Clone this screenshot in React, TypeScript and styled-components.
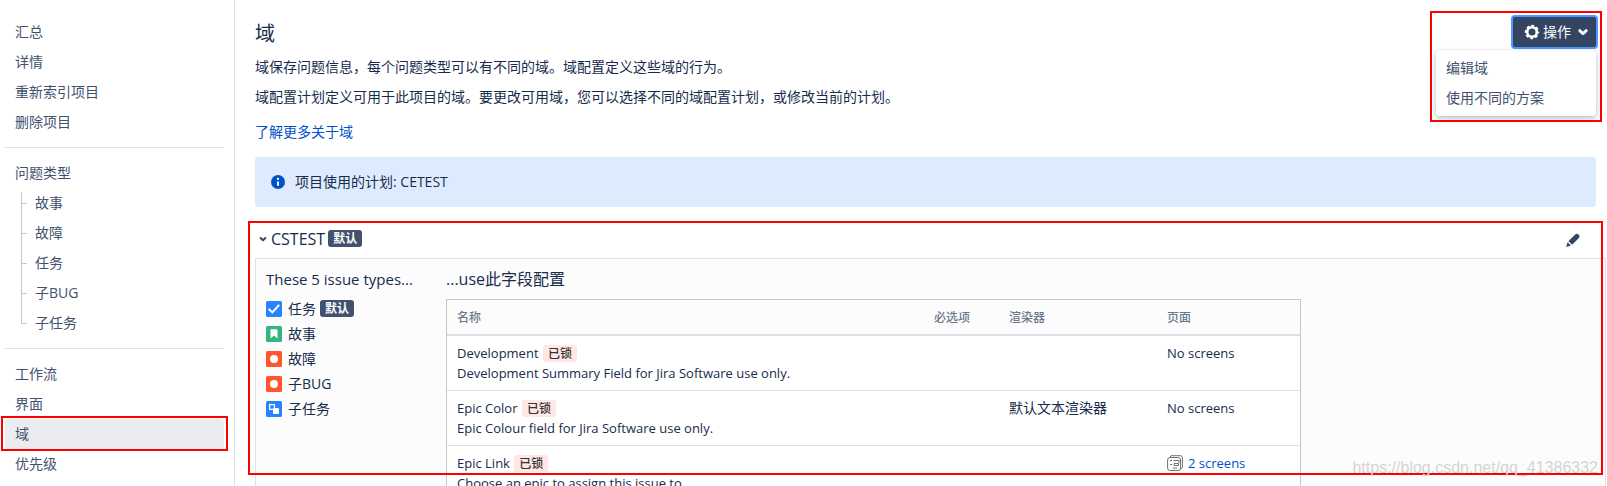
import React from 'react';
import styled, { createGlobalStyle, css } from 'styled-components';

const GlobalStyle = createGlobalStyle`
  *, *::before, *::after { box-sizing: border-box; }
  html, body { margin: 0; height: 100%; }
  body {
    background: #fff;
    color: #172b4d;
    font-family: "Open Sans", "Noto Sans CJK SC", sans-serif;
    font-size: 14px;
    line-height: 20px;
    overflow: hidden;
  }
  a { color: #0052cc; text-decoration: none; }
  a:hover { text-decoration: underline; }
  h1, h2, h3, p, ul { margin: 0; padding: 0; }
  ul { list-style: none; }
`;

const Page = styled.div`
  position: relative;
  display: grid;
  grid-template-columns: 235px minmax(0, 1fr);
  height: 100vh;
  overflow: hidden;
`;

const Sidebar = styled.nav`
  position: relative;
  border-right: 1px solid #dfe1e6;
  padding: 17px 10px 0 5px;
`;

const Divider = styled.hr`
  height: 1px;
  margin: 10px 0;
  border: 0;
  background: #dfe1e6;
`;

const NavLink = styled.a<{ $active?: boolean }>`
  display: block;
  padding: 5px 10px;
  border-radius: 3px;
  color: #42526e;
  background: ${p => (p.$active ? '#ebecf0' : 'transparent')};
`;

const ActiveItem = styled.li`
  position: relative;
`;

const Tree = styled.ul`
  padding-left: 16px;
`;

const TreeItem = styled.li`
  position: relative;
  padding-left: 4px;

  &::before {
    content: "";
    position: absolute;
    left: 0;
    top: 0;
    bottom: 0;
    border-left: 1px solid #c1c7d0;
  }
  &:first-child::before { top: 4px; }
  &:last-child::before { bottom: 14px; }
  &::after {
    content: "";
    position: absolute;
    left: 0;
    top: 15px;
    width: 6px;
    border-top: 1px solid #c1c7d0;
  }
`;

const Highlight = styled.div<{ $inset: string }>`
  position: absolute;
  inset: ${p => p.$inset};
  border: 2px solid #f00;
  pointer-events: none;
`;

const Main = styled.main`
  padding: 15px 1px 0 20px;
`;

const Intro = styled.header`
  display: flex;
  justify-content: space-between;
  margin-right: 10px;
`;

const Title = styled.h1`
  padding-top: 5px;
  font-size: 20px;
  font-weight: 400;
  line-height: 28px;
`;

const Copy = styled.div`
  display: grid;
  gap: 10px;
  padding-top: 9px;
`;

const LearnMore = styled.p`
  padding-top: 5px;
`;

const ActionsArea = styled.div`
  position: relative;
  align-self: flex-start;
`;

const ActionsButton = styled.button`
  display: flex;
  align-items: center;
  gap: 3px;
  height: 34px;
  padding: 0 6px 0 11px;
  border: 2px solid #4c9aff;
  border-radius: 4px;
  margin-right: -2px;
  background: #344563;
  color: #fff;
  font: inherit;
  cursor: pointer;

  svg:last-child { margin-left: 2px; }
`;

const Menu = styled.ul`
  position: absolute;
  top: 35px;
  right: 0;
  width: 160px;
  padding: 3px 0;
  border-radius: 3px;
  background: #fff;
  box-shadow: 0 3px 6px rgba(9, 30, 66, 0.25), 0 0 1px rgba(9, 30, 66, 0.3);
`;

const MenuLink = styled.a`
  display: block;
  padding: 5px 10px;
  color: #42526e;
`;

const Banner = styled.div`
  display: flex;
  align-items: center;
  gap: 10px;
  height: 50px;
  margin: 15px 10px 0 0;
  padding: 0 16px;
  border-radius: 3px;
  background: #deebff;
`;

const Scheme = styled.section`
  position: relative;
  padding-top: 14px;
`;

const SchemeHeader = styled.div`
  display: flex;
  align-items: center;
  justify-content: space-between;
  height: 37px;
  padding: 0 25px 2px 3px;
`;

const SchemeTitle = styled.h2`
  display: flex;
  align-items: center;
  gap: 3px;
  font-size: 16px;
  font-weight: 500;
`;

const IconButton = styled.button`
  display: flex;
  padding: 0;
  border: 0;
  background: none;
  color: #344563;
  cursor: pointer;
`;

const badge = css`
  display: inline-block;
  padding: 0 5px;
  border-radius: 3px;
  font-size: 12px;
  font-weight: 700;
  line-height: 17px;
`;

const DefaultBadge = styled.span`
  ${badge}
  background: #42526e;
  color: #fff;
`;

const LockedBadge = styled.span`
  ${badge}
  margin-left: 1px;
  background: #ffe7e4;
  color: #333;
  font-weight: 500;
`;

const SchemeBody = styled.div`
  display: grid;
  grid-template-columns: 180px minmax(0, 1fr);
  min-height: 400px;
  padding: 10px 10px 20px;
  border: 1px solid #dfe1e6;
  background: #fcfcfc;
`;

const ColumnTitle = styled.h3<{ $large?: boolean }>`
  font-size: ${p => (p.$large ? 16 : 15)}px;
  font-weight: 400;
`;

const IssueTypes = styled.ul`
  margin-top: 7px;
`;

const IssueType = styled.li`
  display: flex;
  align-items: center;
  gap: 6px;
  height: 25px;

  ${DefaultBadge} { margin-left: -2px; }
`;

const FieldTable = styled.table`
  width: 100%;
  max-width: 855px;
  margin-top: 10px;
  border: 1px solid #c1c7d0;
  border-spacing: 0;
  table-layout: fixed;
  background: #fff;

  th, td {
    padding: 7px 10px;
    text-align: left;
    vertical-align: top;
  }
  th {
    padding: 8px 10px 6px;
    border-bottom: 2px solid #dfe1e6;
    background: #fcfcfc;
    color: #6b778c;
    font-size: 12px;
    font-weight: 500;
  }
  td {
    border-bottom: 1px solid #dfe1e6;
    font-size: 13px;
  }
`;

const Column = styled.col<{ $width?: number }>`
  width: ${p => (p.$width ? `${p.$width}px` : 'auto')};
`;

const RendererCell = styled.td`
  && { font-size: 14px; }
`;

const ScreensLink = styled.a`
  display: flex;
  align-items: center;
  gap: 5px;
`;

const Watermark = styled.div`
  position: absolute;
  right: 9px;
  bottom: 8px;
  color: #d4d4d4;
  font-family: "Liberation Sans", sans-serif;
  font-size: 16px;
  pointer-events: none;
`;

const GearIcon = () => (
  <svg width="16" height="16" viewBox="0 0 16 16" fill="none" stroke="#fff" aria-hidden="true">
    <circle cx="8" cy="8" r="4.8" strokeWidth="2.6" />
    <circle cx="8" cy="8" r="6.2" strokeWidth="2" strokeDasharray="2.9 1.97" strokeDashoffset="1.45" />
  </svg>
);

const ChevronIcon = ({ color, size }: { color: string; size: number }) => (
  <svg width={size} height={size} viewBox="0 0 12 12" fill="none" stroke={color} strokeWidth="2.4" strokeLinecap="round" strokeLinejoin="round" aria-hidden="true">
    <path d="M3.2 4.8 6 7.4 8.8 4.8" />
  </svg>
);

const InfoIcon = () => (
  <svg width="14" height="14" viewBox="0 0 14 14" aria-hidden="true">
    <circle cx="7" cy="7" r="7" fill="#0052cc" />
    <circle cx="7" cy="3.9" r="1.1" fill="#fff" />
    <path d="M7 6.5v4.2" stroke="#fff" strokeWidth="2" />
  </svg>
);

const PencilIcon = () => (
  <svg width="16" height="16" viewBox="0 0 16 16" fill="currentColor" aria-hidden="true">
    <path d="M3.4 10.3 10.2 3.5Q11.8 2 13.3 3.4L14 4.1Q15.3 5.4 13.9 6.9L7.2 13.7Z" />
    <path d="M2.5 11.2 6 14.6 1.2 16Z" />
  </svg>
);

const ScreensIcon = () => (
  <svg width="16" height="16" viewBox="0 0 16 16" fill="none" stroke="#707070" aria-hidden="true">
    <path d="M3 2.5 4 .7H13.5Q15.4.7 15.4 2.6V12.5L13.6 14" />
    <rect x=".6" y="2.5" width="13" height="13" rx="2.5" />
    <path d="M3 5.5h2M6.5 5.5H12M3 9.5h2M7 8.5h4.5v2H7zM6 13h4M12 5v3" />
  </svg>
);

type IssueKind = 'task' | 'story' | 'bug' | 'subtask';

const issueColor: Record<IssueKind, string> = {
  task: '#2684ff',
  story: '#36b37e',
  bug: '#ff5630',
  subtask: '#2684ff',
};

const IssueIcon = ({ kind }: { kind: IssueKind }) => (
  <svg width="16" height="16" viewBox="0 0 16 16" aria-hidden="true">
    <rect width="16" height="16" rx="1.5" fill={issueColor[kind]} />
    {kind === 'task' && <path d="m3.2 8.4 3.2 3 6.3-7" fill="none" stroke="#fff" strokeWidth="2" strokeLinecap="round" />}
    {kind === 'story' && <path d="M4.5 4.2q0-.9.9-.9h5.2q.9 0 .9.9v8.2L8 9.4l-3.5 3Z" fill="#fff" />}
    {kind === 'bug' && <circle cx="8" cy="8" r="4" fill="#fff" />}
    {kind === 'subtask' && (
      <>
        <rect x="3.6" y="3.6" width="4.8" height="4.8" fill="none" stroke="#fff" strokeWidth="1.3" />
        <rect x="7" y="7" width="6" height="6" rx=".8" fill="#fff" />
      </>
    )}
  </svg>
);

const projectLinks = ['汇总', '详情', '重新索引项目', '删除项目'];
const typeLinks = ['故事', '故障', '任务', '子BUG', '子任务'];

const issueTypes: { name: string; kind: IssueKind; isDefault?: boolean }[] = [
  { name: '任务', kind: 'task', isDefault: true },
  { name: '故事', kind: 'story' },
  { name: '故障', kind: 'bug' },
  { name: '子BUG', kind: 'bug' },
  { name: '子任务', kind: 'subtask' },
];

const fields = [
  { name: 'Development', description: 'Development Summary Field for Jira Software use only.', renderer: '', screens: 0 },
  { name: 'Epic Color', description: 'Epic Colour field for Jira Software use only.', renderer: '默认文本渲染器', screens: 0 },
  { name: 'Epic Link', description: 'Choose an epic to assign this issue to.', renderer: '', screens: 2 },
];

const NavItem = ({ label }: { label: string }) => (
  <li>
    <NavLink href="#">{label}</NavLink>
  </li>
);

export default function App() {
  return (
    <>
      <GlobalStyle />
      <Page>
        <Sidebar>
          <ul>{projectLinks.map(label => <NavItem key={label} label={label} />)}</ul>
          <Divider />
          <NavLink href="#">问题类型</NavLink>
          <Tree>
            {typeLinks.map(label => (
              <TreeItem key={label}>
                <NavLink href="#">{label}</NavLink>
              </TreeItem>
            ))}
          </Tree>
          <Divider />
          <ul>
            <NavItem label="工作流" />
            <NavItem label="界面" />
            <ActiveItem>
              <NavLink href="#" $active aria-current="page">域</NavLink>
              <Highlight $inset="-3px -4px -2px -4px" />
            </ActiveItem>
            <NavItem label="优先级" />
          </ul>
        </Sidebar>

        <Main>
          <Intro>
            <div>
              <Title>域</Title>
              <Copy>
                <p>域保存问题信息，每个问题类型可以有不同的域。域配置定义这些域的行为。</p>
                <p>域配置计划定义可用于此项目的域。要更改可用域，您可以选择不同的域配置计划，或修改当前的计划。</p>
                <LearnMore><a href="#">了解更多关于域</a></LearnMore>
              </Copy>
            </div>
            <ActionsArea>
              <ActionsButton type="button" aria-expanded="true">
                <GearIcon />
                操作
                <ChevronIcon color="#fff" size={14} />
              </ActionsButton>
              <Menu>
                <li><MenuLink href="#">编辑域</MenuLink></li>
                <li><MenuLink href="#">使用不同的方案</MenuLink></li>
              </Menu>
              <Highlight $inset="-4px -6px -73px -81px" />
            </ActionsArea>
          </Intro>

          <Banner>
            <InfoIcon />
            <span>项目使用的计划: CETEST</span>
          </Banner>

          <Scheme>
            <SchemeHeader>
              <SchemeTitle>
                <IconButton type="button" aria-label="CSTEST"><ChevronIcon color="#344563" size={10} /></IconButton>
                CSTEST
                <DefaultBadge>默认</DefaultBadge>
              </SchemeTitle>
              <IconButton type="button" aria-label="编辑域"><PencilIcon /></IconButton>
            </SchemeHeader>
            <SchemeBody>
              <div>
                <ColumnTitle>These 5 issue types...</ColumnTitle>
                <IssueTypes>
                  {issueTypes.map(type => (
                    <IssueType key={type.name}>
                      <IssueIcon kind={type.kind} />
                      <span>{type.name}</span>
                      {type.isDefault && <DefaultBadge>默认</DefaultBadge>}
                    </IssueType>
                  ))}
                </IssueTypes>
              </div>
              <div>
                <ColumnTitle $large>...use此字段配置</ColumnTitle>
                <FieldTable>
                  <colgroup>
                    <Column />
                    <Column $width={75} />
                    <Column $width={158} />
                    <Column $width={143} />
                  </colgroup>
                  <thead>
                    <tr>
                      <th scope="col">名称</th>
                      <th scope="col">必选项</th>
                      <th scope="col">渲染器</th>
                      <th scope="col">页面</th>
                    </tr>
                  </thead>
                  <tbody>
                    {fields.map(field => (
                      <tr key={field.name}>
                        <td>
                          <div>{field.name} <LockedBadge>已锁</LockedBadge></div>
                          <div>{field.description}</div>
                        </td>
                        <td />
                        <RendererCell>{field.renderer}</RendererCell>
                        <td>
                          {field.screens > 0
                            ? <ScreensLink href="#"><ScreensIcon />{field.screens} screens</ScreensLink>
                            : 'No screens'}
                        </td>
                      </tr>
                    ))}
                  </tbody>
                </FieldTable>
              </div>
            </SchemeBody>
          </Scheme>
        </Main>
        <Highlight $inset="221px 4px 11px 248px" />
        <Watermark>https://blog.csdn.net/qq_41386332</Watermark>
      </Page>
    </>
  );
}
